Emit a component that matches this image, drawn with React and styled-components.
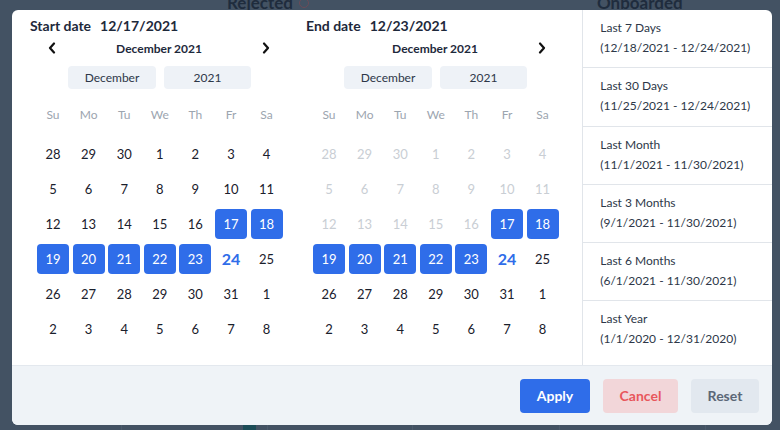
import React from 'react';
import styled, { createGlobalStyle } from 'styled-components';

const GlobalStyle = createGlobalStyle`
	html, body {
		margin: 0;
		padding: 0;
		width: 780px;
		height: 430px;
		overflow: hidden;
		background: #435263;
		font-family: Lato, 'Open Sans', sans-serif;
	}
`;

const Page = styled.div`
	position: relative;
	width: 780px;
	height: 430px;
	background: #435263;
	overflow: hidden;
`;

const Backdrop = styled.div`
	display: flex;
	flex-direction: column;
	height: 100%;
`;

const BackHeader = styled.div`
	display: flex;
	align-items: flex-start;
	height: 14px;
	padding-left: 227px;
	margin-top: -7px;
`;

const BackTitle = styled.span`
	font-size: 17px;
	line-height: 20px;
	font-weight: 700;
	color: #1f2c3d;
	width: ${(p) => (p.w ? `${p.w}px` : 'auto')};
	display: inline-flex;
	align-items: center;
	gap: 6px;
`;

const InfoDot = styled.span`
	width: 10px;
	height: 10px;
	border: 1.3px solid #6b4b58;
	border-radius: 50%;
	box-sizing: border-box;
`;

const BackTable = styled.div`
	margin-top: auto;
	display: grid;
	grid-template-columns: 121px 146px 145px 147px 146px 75px;
	height: 6px;
`;

const BackCell = styled.div`
	border-left: 1px solid ${(p) => (p.first ? 'transparent' : '#4c5b6c')};
	position: relative;
`;

const TealBar = styled.div`
	position: absolute;
	left: 121px;
	width: 13px;
	top: 0;
	bottom: 0;
	background: #1c4c57;
`;

const Modal = styled.div`
	position: absolute;
	top: 10px;
	left: 12px;
	width: 760px;
	height: 415px;
	background: #fff;
	border-radius: 6px;
	overflow: hidden;
	display: flex;
	flex-direction: column;
`;

const Body = styled.div`
	display: flex;
	height: 355px;
`;

const Calendars = styled.div`
	display: flex;
	width: 571px;
`;

const Panel = styled.div`
	width: 276px;
	padding: 6px 0 0 18px;
	box-sizing: border-box;
`;

const DateLabel = styled.div`
	display: flex;
	gap: 9px;
	height: 20px;
	line-height: 20px;
	font-size: 14px;
	font-weight: 700;
	color: #1e293b;
`;

const Inner = styled.div`
	margin-left: 7px;
	width: 245px;
`;

const Nav = styled.div`
	margin-top: 2px;
	height: 20px;
	display: flex;
	align-items: center;
	justify-content: space-between;
	padding: 0 12px 0 11px;
`;

const NavTitle = styled.span`
	font-size: 12px;
	font-weight: 700;
	color: #1e293b;
	flex: 1;
	text-align: center;
`;

const ArrowBox = styled.span`
	width: 8px;
	height: 12px;
	display: flex;
	align-items: center;
	justify-content: center;
	visibility: ${(p) => (p.hidden ? 'hidden' : 'visible')};
`;

const Selects = styled.div`
	margin-top: 8px;
	display: flex;
	justify-content: center;
	gap: 8px;
`;

const SelectBox = styled.div`
	width: ${(p) => p.w}px;
	height: 23px;
	line-height: 23px;
	background: #eef2f7;
	border-radius: 4px;
	text-align: center;
	font-size: 12px;
	color: #2d3748;
`;

const Grid = styled.div`
	display: grid;
	grid-template-columns: repeat(7, 32px);
	column-gap: 3.6px;
	row-gap: 5px;
	margin-top: ${(p) => p.mt}px;
`;

const Weekday = styled.div`
	height: 20px;
	line-height: 20px;
	text-align: center;
	font-size: 12px;
	color: #9ca5af;
`;

const Day = styled.div`
	height: 30px;
	line-height: 30px;
	text-align: center;
	border-radius: 4px;
	font-size: ${(p) => (p.today ? '16px' : '13px')};
	font-weight: ${(p) => (p.today ? 700 : 400)};
	background: ${(p) => (p.selected ? '#2f6de9' : 'transparent')};
	color: ${(p) =>
		p.selected ? '#fff' : p.today ? '#2f6de9' : p.disabled ? '#c9ced4' : '#1a202c'};
`;

const Presets = styled.div`
	width: 189px;
	border-left: 1px solid #e1e5ea;
	display: flex;
	flex-direction: column;
`;

const Preset = styled.div`
	height: ${(p) => (p.last ? 'auto' : '58.3px')};
	flex: ${(p) => (p.last ? 1 : 'none')};
	box-sizing: border-box;
	padding: 8px 0 0 17px;
	border-bottom: ${(p) => (p.last ? 'none' : '1px solid #e1e5ea')};
	font-size: 12px;
	line-height: 20px;
	color: #2d3748;
`;

const Footer = styled.div`
	flex: 1;
	background: #eff3f7;
	border-top: 1px solid #e3e8ee;
	display: flex;
	align-items: center;
	justify-content: flex-end;
	gap: 13px;
	padding-right: 13px;
`;

const Button = styled.button`
	height: 34px;
	width: ${(p) => p.w}px;
	border: none;
	border-radius: 4px;
	font-family: Lato, sans-serif;
	font-size: 14px;
	font-weight: 700;
	background: ${(p) => p.bg};
	color: ${(p) => p.fg};
	cursor: pointer;
`;

const Chevron = ({ dir }) => (
	<svg width="8" height="12" viewBox="0 0 8 12">
		<path
			d={dir === 'left' ? 'M6 1.5 L2 6 L6 10.5' : 'M2 1.5 L6 6 L2 10.5'}
			fill="none"
			stroke="#111"
			strokeWidth="2.2"
			strokeLinecap="round"
			strokeLinejoin="round"
		/>
	</svg>
);

const weekdays = ['Su', 'Mo', 'Tu', 'We', 'Th', 'Fr', 'Sa'];

const days = [
	[28, 'p'], [29, 'p'], [30, 'p'],
	...Array.from({ length: 31 }, (_, i) => [i + 1, 'c']),
	...Array.from({ length: 8 }, (_, i) => [i + 1, 'n']),
];

function Calendar({ label, date, showPrev, disableBefore }) {
	return (
		<Panel>
			<DateLabel>
				<span>{label}</span>
				<span>{date}</span>
			</DateLabel>
			<Inner>
				<Nav>
					<ArrowBox hidden={!showPrev}>
						<Chevron dir="left" />
					</ArrowBox>
					<NavTitle>December 2021</NavTitle>
					<ArrowBox>
						<Chevron dir="right" />
					</ArrowBox>
				</Nav>
				<Selects>
					<SelectBox w={88}>December</SelectBox>
					<SelectBox w={87}>2021</SelectBox>
				</Selects>
				<Grid mt={16}>
					{weekdays.map((w) => (
						<Weekday key={w}>{w}</Weekday>
					))}
				</Grid>
				<Grid mt={14}>
					{days.map(([d, m], i) => {
						const cur = m === 'c';
						const selected = cur && d >= 17 && d <= 23;
						const today = cur && d === 24;
						const disabled =
							disableBefore && (m === 'p' || (cur && d < 17));
						return (
							<Day key={i} selected={selected} today={today} disabled={disabled}>
								{d}
							</Day>
						);
					})}
				</Grid>
			</Inner>
		</Panel>
	);
}

const presets = [
	['Last 7 Days', '(12/18/2021 - 12/24/2021)'],
	['Last 30 Days', '(11/25/2021 - 12/24/2021)'],
	['Last Month', '(11/1/2021 - 11/30/2021)'],
	['Last 3 Months', '(9/1/2021 - 11/30/2021)'],
	['Last 6 Months', '(6/1/2021 - 11/30/2021)'],
	['Last Year', '(1/1/2020 - 12/31/2020)'],
];

export default function App() {
	return (
		<Page>
			<GlobalStyle />
			<Backdrop>
				<BackHeader>
					<BackTitle w={370}>
						Rejected <InfoDot />
					</BackTitle>
					<BackTitle>Onboarded</BackTitle>
				</BackHeader>
				<BackTable>
					<BackCell first />
					<BackCell>
						<TealBar />
					</BackCell>
					<BackCell />
					<BackCell />
					<BackCell />
					<BackCell />
				</BackTable>
			</Backdrop>
			<Modal>
				<Body>
					<Calendars>
						<Calendar label="Start date" date="12/17/2021" showPrev />
						<Calendar label="End date" date="12/23/2021" disableBefore />
					</Calendars>
					<Presets>
						{presets.map(([t, r], i) => (
							<Preset key={t} last={i === presets.length - 1}>
								<div>{t}</div>
								<div>{r}</div>
							</Preset>
						))}
					</Presets>
				</Body>
				<Footer>
					<Button w={70} bg="#2f6de9" fg="#fff">Apply</Button>
					<Button w={75} bg="#f2d6d9" fg="#e8565c">Cancel</Button>
					<Button w={68} bg="#e2e8ef" fg="#5b6777">Reset</Button>
				</Footer>
			</Modal>
		</Page>
	);
}
